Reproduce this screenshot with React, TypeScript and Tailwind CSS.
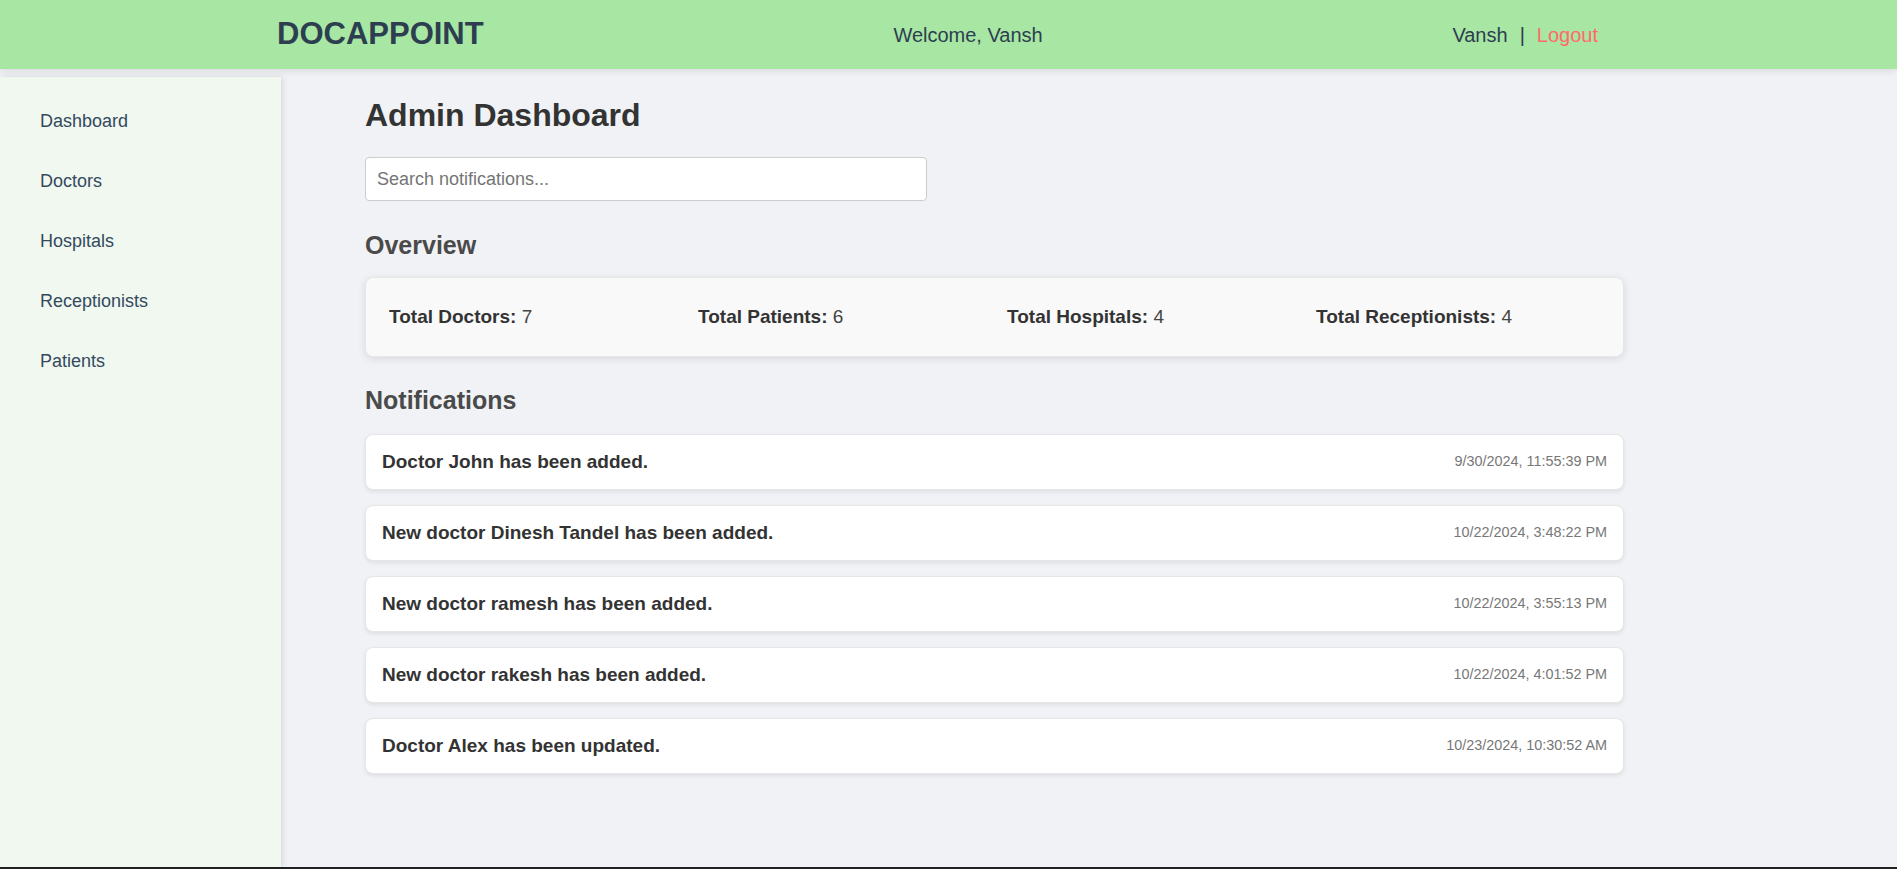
const navItems = ["Dashboard", "Doctors", "Hospitals", "Receptionists", "Patients"];

const stats = [
  { label: "Total Doctors:", value: 7 },
  { label: "Total Patients:", value: 6 },
  { label: "Total Hospitals:", value: 4 },
  { label: "Total Receptionists:", value: 4 },
];

const notifications = [
  { message: "Doctor John has been added.", time: "9/30/2024, 11:55:39 PM" },
  { message: "New doctor Dinesh Tandel has been added.", time: "10/22/2024, 3:48:22 PM" },
  { message: "New doctor ramesh has been added.", time: "10/22/2024, 3:55:13 PM" },
  { message: "New doctor rakesh has been added.", time: "10/22/2024, 4:01:52 PM" },
  { message: "Doctor Alex has been updated.", time: "10/23/2024, 10:30:52 AM" },
];

export default function App() {
  return (
    <div className="min-h-screen bg-[#f0f2f5] font-['Liberation_Sans',Arial,sans-serif]">
      {/* Header */}
      <header className="relative z-10 flex h-[69px] items-center justify-between bg-[#a8e6a3] pl-[277px] pr-[299px] shadow-[0_2px_8px_rgba(0,0,0,0.1)]">
        <div className="text-[31px] font-bold text-[#2c3e50]">DOCAPPOINT</div>
        <div className="text-[20px] text-[#2c3e50]">Welcome, Vansh</div>
        <div className="flex items-center text-[20px] text-[#2c3e50]">
          <span>Vansh</span>
          <span className="mx-3">|</span>
          <span className="text-[#ff6b6b]">Logout</span>
        </div>
      </header>

      <div className="mt-2 flex h-[790px]">
        {/* Sidebar */}
        <aside className="w-[281px] shrink-0 bg-[#f0f8f0] pt-[14px] shadow-[2px_0_6px_rgba(0,0,0,0.1)]">
          <nav>
            {navItems.map((item) => (
              <div key={item} className="flex h-[60px] items-center pl-10 text-[18px] text-[#34495e]">
                {item}
              </div>
            ))}
          </nav>
        </aside>

        {/* Main Content */}
        <main className="flex-1 pl-[84px] pt-[20px]">
          <div className="w-[1259px]">
            <h1 className="text-[32px] font-bold leading-[37px] text-[#333]">Admin Dashboard</h1>

            <input
              type="text"
              placeholder="Search notifications..."
              className="mt-[23px] h-[44px] w-[562px] rounded border border-[#ccc] bg-white px-[11px] text-[18px] text-[#333] placeholder:text-[#757575] outline-none"
            />

            <h2 className="mt-[30px] text-[25px] font-bold leading-[29px] text-[#4a4a4a]">Overview</h2>
            <div className="mt-[17px] grid h-[80px] grid-cols-[repeat(4,309px)] items-center rounded-lg border border-[#e6e6e6] bg-[#f9f9f9] pl-[23px] shadow-[0_2px_8px_rgba(0,0,0,0.1)]">
              {stats.map((s) => (
                <div key={s.label} className="text-[19px] text-[#444]">
                  <span className="font-bold text-[#333]">{s.label}</span> {s.value}
                </div>
              ))}
            </div>

            <h2 className="mt-[29px] text-[25px] font-bold leading-[29px] text-[#4a4a4a]">Notifications</h2>
            <div className="mt-[19px] flex flex-col gap-[15px]">
              {notifications.map((n) => (
                <div
                  key={n.time}
                  className="flex items-center justify-between rounded-lg border border-[#e6e6e6] bg-white px-4 py-4 shadow-[0_2px_4px_rgba(0,0,0,0.08)]"
                >
                  <span className="text-[19px] font-bold leading-[22px] text-[#333]">{n.message}</span>
                  <span className="text-[14.4px] text-[#777]">{n.time}</span>
                </div>
              ))}
            </div>
          </div>
        </main>
      </div>

      <footer className="h-[60px] bg-[#222]" />
    </div>
  );
}
